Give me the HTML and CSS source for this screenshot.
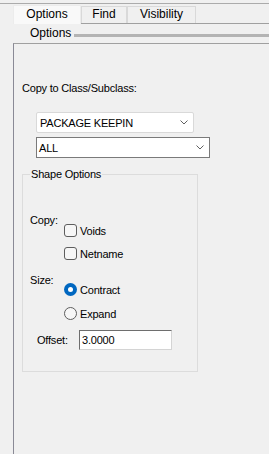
FILE: index.html
```html
<!DOCTYPE html>
<html>

<head>
	<meta charset="UTF-8">
	<meta name="viewport" content="width=device-width, initial-scale=1.0">
	<title>Options</title>
	<link rel="stylesheet" href="styles.css">
</head>

<body>
	<div class="topline"></div>
	<div class="tabbar">
		<div class="tab tab-options active">Options</div>
		<div class="tab tab-find">Find</div>
		<div class="tab tab-visibility">Visibility</div>
	</div>

	<div class="section-title">
		<span>Options</span>
		<div class="rule"></div>
	</div>

	<div class="panel">
		<div class="caption">Copy to Class/Subclass:</div>

		<div class="combo combo-class">
			<span>PACKAGE KEEPIN</span>
			<svg class="chevron" width="8" height="5" viewBox="0 0 8 5">
				<polyline points="0.5,0.5 4,4 7.5,0.5" />
			</svg>
		</div>
		<div class="combo combo-sub">
			<span>ALL</span>
			<svg class="chevron" width="8" height="5" viewBox="0 0 8 5">
				<polyline points="0.5,0.5 4,4 7.5,0.5" />
			</svg>
		</div>

		<fieldset class="group">
			<legend>Shape Options</legend>

			<div class="opt-row copy-row">
				<div class="opt-label">Copy:</div>
				<div class="opt-list">
					<label class="opt-item"><span class="checkbox"></span>Voids</label>
					<label class="opt-item"><span class="checkbox"></span>Netname</label>
				</div>
			</div>

			<div class="opt-row size-row">
				<div class="opt-label">Size:</div>
				<div class="opt-list radios">
					<label class="opt-item"><span class="radio on"></span>Contract</label>
					<label class="opt-item"><span class="radio"></span>Expand</label>
				</div>
			</div>

			<div class="offset-row">
				<span class="offset-label">Offset:</span>
				<input type="text" class="offset-input" value="3.0000" />
			</div>
		</fieldset>
	</div>
</body>

</html>
```

FILE: styles.css
```css
html {
	box-sizing: border-box;
	font-size: 11px;
}

*,
*:before,
*:after {
	box-sizing: inherit;
}

body {
	margin: 0;
	height: 454px;
	overflow: hidden;
	background: #f0f0f0;
	color: #000;
	font-family: "Liberation Sans", Arial, sans-serif;
	font-size: 11px;
	line-height: 14px;
	letter-spacing: -0.2px;
}

/* tab strip */

.topline {
	margin-top: 3px;
	border-top: 1px solid #ababab;
}

.tabbar {
	display: flex;
	align-items: flex-end;
	height: 19px;
	margin: 1px 0 0 13px;
	border-bottom: 1px solid #a0a0a0;
}

.tab {
	height: 17px;
	border: 1px solid #d9d9d9;
	border-bottom: 0;
	font-size: 12px;
	line-height: 15px;
	letter-spacing: 0;
	text-align: center;
}

.tab.active {
	height: 19px;
	margin-bottom: -1px;
	line-height: 17px;
	background: #f9f9f9;
	border-color: #ececec;
}

.tab-options {
	width: 68px;
}

.tab-find {
	width: 46px;
}

.tab-visibility {
	width: 69px;
}

.section-title {
	display: flex;
	align-items: flex-start;
	height: 19px;
	padding: 2px 0 0 30px;
	font-size: 12px;
	letter-spacing: 0;
}

.rule {
	flex: 1;
	height: 3px;
	margin: 8px 0 0 3px;
	background: #b4b4b4;
}

/* main panel */

.panel {
	height: 411px;
	margin-left: 13px;
	padding: 37px 0 0 8px;
	border-top: 1px solid #a0a0a0;
	border-left: 1px solid #8a8a96;
}

.combo {
	display: flex;
	align-items: center;
	justify-content: space-between;
	height: 21px;
	margin-left: 14px;
	padding: 0 5px 0 3px;
	background: #fff;
}

.combo-class {
	width: 158px;
	margin-top: 17px;
	border: 1px solid #d9d9d9;
	border-radius: 2px;
}

.combo-sub {
	width: 174px;
	margin-top: 4px;
	padding-left: 2px;
	border: 1px solid #7a7a7a;
}

.chevron polyline {
	fill: none;
	stroke: #606060;
	stroke-width: 1;
}

/* shape options group */

.group {
	width: 176px;
	min-width: 0;
	margin: 9px 0 0 0;
	padding: 0 0 21px 7px;
	border: 1px solid #dcdcdc;
}

.group legend {
	padding: 0 1px;
	line-height: 14px;
}

.opt-row {
	display: flex;
}

.opt-label {
	width: 34px;
}

.copy-row {
	margin-top: 32px;
}

.size-row {
	margin-top: 13px;
}

.opt-list {
	display: flex;
	flex-direction: column;
	gap: 10px;
	padding-top: 11px;
}

.opt-list.radios {
	gap: 11px;
	padding-top: 10px;
}

.opt-item {
	display: flex;
	align-items: center;
	gap: 3px;
	height: 13px;
}

.checkbox {
	width: 13px;
	height: 13px;
	border: 1px solid #5d5d5d;
	border-radius: 3px;
	background: #f6f6f6;
}

.radio {
	display: flex;
	align-items: center;
	justify-content: center;
	width: 13px;
	height: 13px;
	border: 1px solid #5d5d5d;
	border-radius: 50%;
	background: #f6f6f6;
}

.radio.on {
	border: 0;
	background: #0067c0;
}

.radio.on:after {
	content: "";
	width: 5px;
	height: 5px;
	border-radius: 50%;
	background: #fff;
}

.offset-row {
	display: flex;
	align-items: center;
	margin-top: 10px;
}

.offset-label {
	width: 42px;
	margin-left: 7px;
}

.offset-input {
	width: 93px;
	height: 20px;
	margin: 0;
	padding: 0 2px;
	border: 1px solid;
	border-color: #6e6e6e #d4d4d4 #d4d4d4 #6e6e6e;
	background: #fff;
	color: #000;
	font-family: "Liberation Sans", Arial, sans-serif;
	font-size: 11px;
	letter-spacing: -0.2px;
	outline: none;
}
```
